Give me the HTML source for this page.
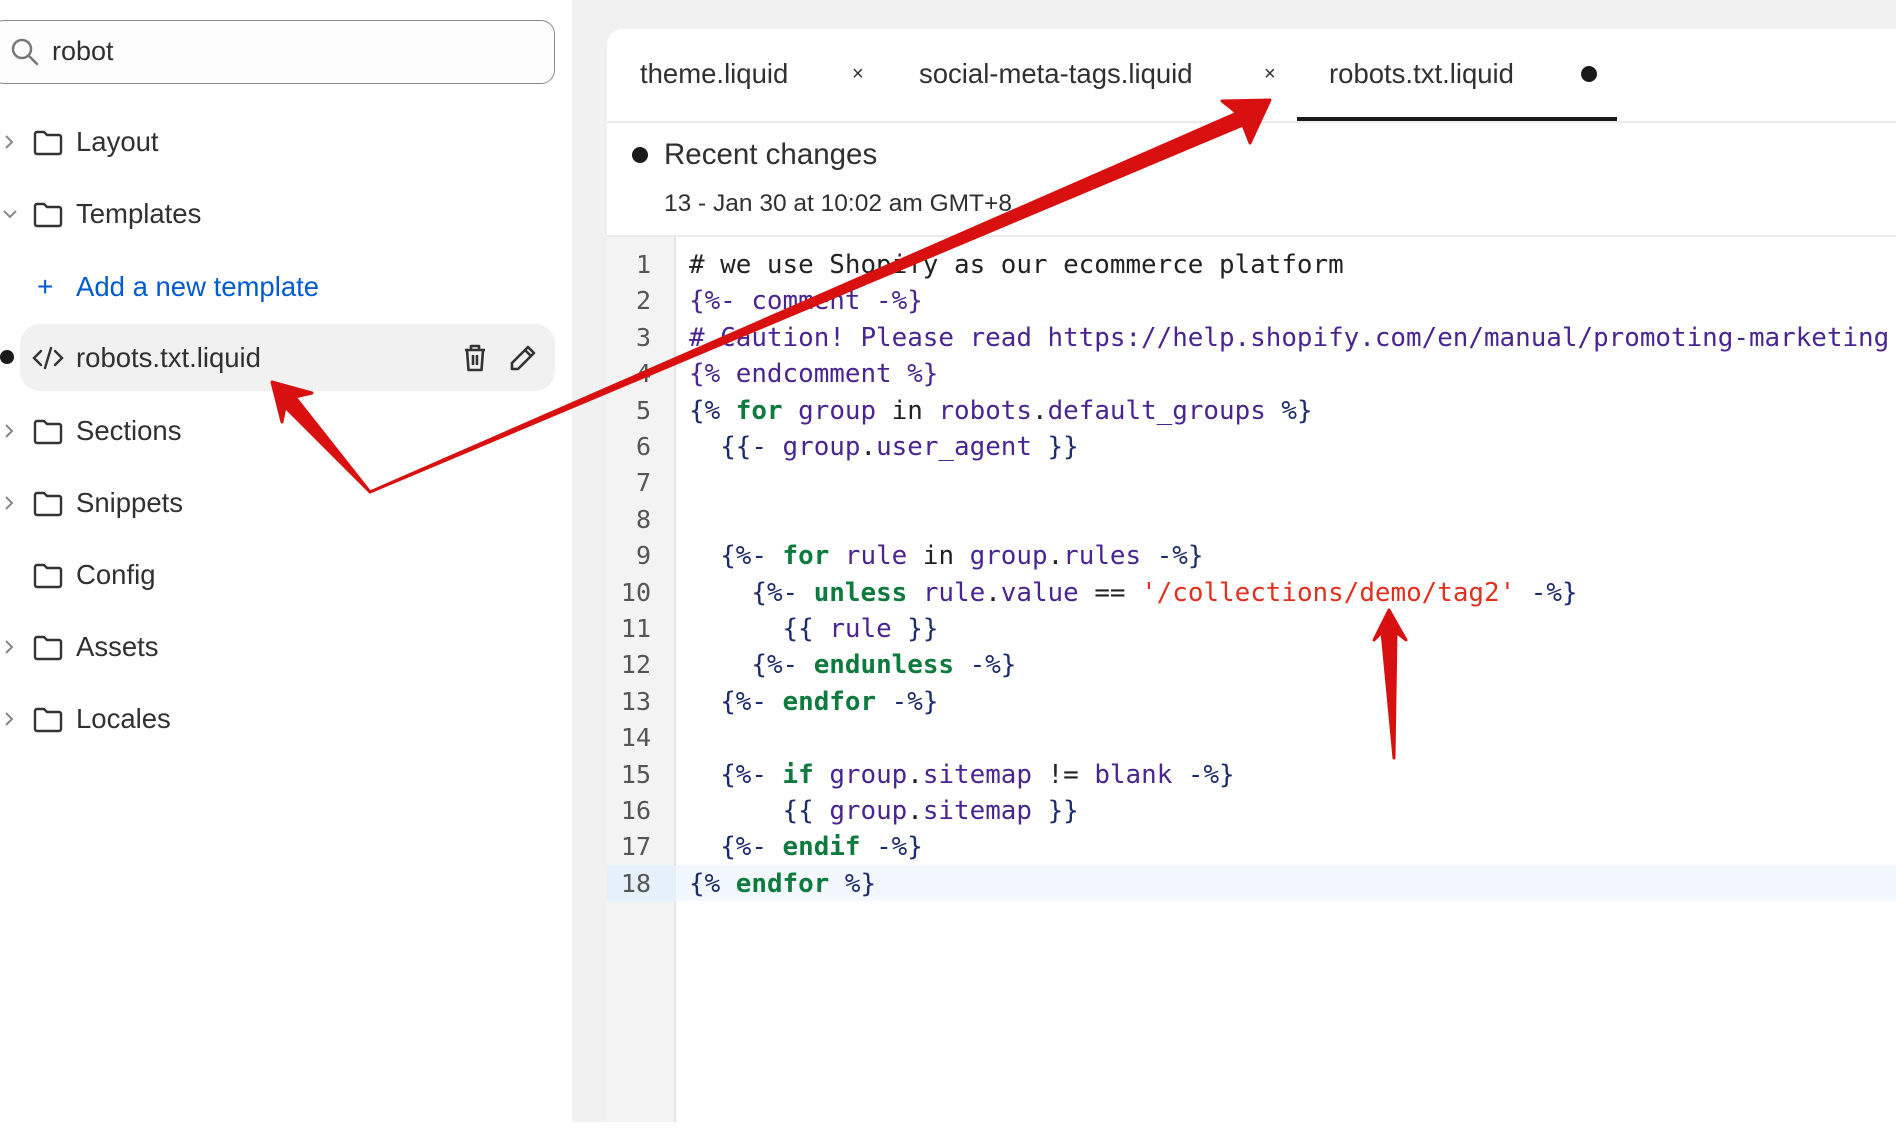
<!DOCTYPE html>
<html><head><meta charset="utf-8"><style>
*{margin:0;padding:0;box-sizing:border-box}
body{width:1896px;height:1122px;overflow:hidden;background:#fff;font-family:"Liberation Sans",sans-serif;color:#303030;position:relative}
#side{position:absolute;left:0;top:0;width:572px;height:1122px;background:#fff}
#search{position:absolute;left:-10px;top:20px;width:565px;height:64px;border:1.5px solid #8a8a8a;border-radius:14px;background:#fdfdfd}
#search span{position:absolute;left:61px;top:15px;font-size:27px;color:#303030}
.row{position:absolute;left:0;height:40px;font-size:27.5px;line-height:40px}
.row .t{position:absolute;left:76px;white-space:nowrap}
.chev{position:absolute;left:2px;top:12px}
.fold{position:absolute;left:33px;top:8px}
#sel{position:absolute;left:20px;top:324px;width:535px;height:67px;background:#f1f1f1;border-radius:20px}
#main{position:absolute;left:572px;top:0;width:1324px;height:1122px;background:#f1f1f1}
#card{position:absolute;left:607px;top:29px;width:1300px;height:1100px;background:#fff;border-top-left-radius:16px}
.tab{position:absolute;top:58px;font-size:27.5px;color:#303030;white-space:nowrap}
#code{position:absolute;left:607px;top:237px;width:1289px;height:885px;background:#fff}
#gutter{position:absolute;left:0;top:0;width:69px;height:885px;background:#f3f3f3;border-right:2px solid #e3e3e3}
.ln{position:absolute;left:0;width:44px;text-align:right;font-family:"DejaVu Sans Mono",monospace;font-size:25px;color:#555}
.cl{position:absolute;left:82px;white-space:pre;font-family:"DejaVu Sans Mono","Liberation Mono",monospace;font-size:25.9px;color:#222}
.d{color:#1c2a6e}.v{color:#4a2592}.k{color:#0f7a3d;font-weight:bold}.s{color:#e0301e}
</style></head><body>
<div id="side">
<div id="search"><svg style="position:absolute;left:19px;top:16px" width="30" height="30" viewBox="0 0 30 30"><circle cx="12" cy="12" r="9" fill="none" stroke="#777" stroke-width="2.5"/><line x1="19" y1="19" x2="27" y2="27" stroke="#777" stroke-width="2.5" stroke-linecap="round"/></svg><span>robot</span></div>
<div id="sel"></div>
</div>
<div id="main"></div>
<div id="card">
<div style="position:absolute;left:0;top:92px;width:1300px;height:2px;background:#ebebeb"></div>
<div style="position:absolute;left:0;top:206px;width:1300px;height:2px;background:#ebebeb"></div>
</div>
<div class="tab" style="left:640px">theme.liquid</div>
<div class="tab" style="left:852px;font-size:20px;top:63px">×</div>
<div class="tab" style="left:919px">social-meta-tags.liquid</div>
<div class="tab" style="left:1264px;font-size:20px;top:63px">×</div>
<div class="tab" style="left:1329px">robots.txt.liquid</div>
<div style="position:absolute;left:1581px;top:66px;width:16px;height:16px;border-radius:50%;background:#1a1a1a"></div>
<div style="position:absolute;left:1297px;top:117px;width:320px;height:4px;background:#1a1a1a"></div>
<div style="position:absolute;left:632px;top:147px;width:16px;height:16px;border-radius:50%;background:#1a1a1a"></div>
<div style="position:absolute;left:664px;top:138px;font-size:29.5px;color:#303030">Recent changes</div>
<div style="position:absolute;left:664px;top:188px;font-size:24.5px;color:#303030">13 - Jan 30 at 10:02 am GMT+8 ⌄</div>

<div id="code">
<div style="position:absolute;left:0;top:628px;width:1289px;height:36px;background:#f2f8fe"></div>
<div id="gutter"></div>
<div style="position:absolute;left:0;top:628px;width:69px;height:36px;background:#e6f0fb"></div>
</div>

<div id="lines" style="position:absolute;left:607px;top:250px">
<div class="ln" style="top:0">1</div><div class="ln" style="top:36.4px">2</div><div class="ln" style="top:72.8px">3</div><div class="ln" style="top:109.2px">4</div><div class="ln" style="top:145.6px">5</div><div class="ln" style="top:182px">6</div><div class="ln" style="top:218.4px">7</div><div class="ln" style="top:254.8px">8</div><div class="ln" style="top:291.2px">9</div><div class="ln" style="top:327.6px">10</div><div class="ln" style="top:364px">11</div><div class="ln" style="top:400.4px">12</div><div class="ln" style="top:436.8px">13</div><div class="ln" style="top:473.2px">14</div><div class="ln" style="top:509.6px">15</div><div class="ln" style="top:546px">16</div><div class="ln" style="top:582.4px">17</div><div class="ln" style="top:618.8px">18</div>
<div class="cl" style="top:0"># we use Shopify as our ecommerce platform</div>
<div class="cl v" style="top:36.4px">{%- comment -%}</div>
<div class="cl v" style="top:72.8px"># Caution! Please read https://help.shopify.com/en/manual/promoting-marketing</div>
<div class="cl v" style="top:109.2px">{% endcomment %}</div>
<div class="cl" style="top:145.6px"><span class="d">{%</span> <span class="k">for</span> <span class="v">group</span> in <span class="v">robots</span>.<span class="v">default_groups</span> <span class="d">%}</span></div>
<div class="cl" style="top:182px">  <span class="d">{{-</span> <span class="v">group</span>.<span class="v">user_agent</span> <span class="d">}}</span></div>
<div class="cl" style="top:291.2px">  <span class="d">{%-</span> <span class="k">for</span> <span class="v">rule</span> in <span class="v">group</span>.<span class="v">rules</span> <span class="d">-%}</span></div>
<div class="cl" style="top:327.6px">    <span class="d">{%-</span> <span class="k">unless</span> <span class="v">rule</span>.<span class="v">value</span> == <span class="s">'/collections/demo/tag2'</span> <span class="d">-%}</span></div>
<div class="cl" style="top:364px">      <span class="d">{{</span> <span class="v">rule</span> <span class="d">}}</span></div>
<div class="cl" style="top:400.4px">    <span class="d">{%-</span> <span class="k">endunless</span> <span class="d">-%}</span></div>
<div class="cl" style="top:436.8px">  <span class="d">{%-</span> <span class="k">endfor</span> <span class="d">-%}</span></div>
<div class="cl" style="top:509.6px">  <span class="d">{%-</span> <span class="k">if</span> <span class="v">group</span>.<span class="v">sitemap</span> != <span class="v">blank</span> <span class="d">-%}</span></div>
<div class="cl" style="top:546px">      <span class="d">{{</span> <span class="v">group</span>.<span class="v">sitemap</span> <span class="d">}}</span></div>
<div class="cl" style="top:582.4px">  <span class="d">{%-</span> <span class="k">endif</span> <span class="d">-%}</span></div>
<div class="cl" style="top:618.8px"><span class="d">{%</span> <span class="k">endfor</span> <span class="d">%}</span></div>
</div>

<!-- sidebar rows -->
<div class="row" style="top:122px"><svg class="chev" width="14" height="16" viewBox="0 0 14 16"><path d="M4 2l6 6-6 6" fill="none" stroke="#888" stroke-width="2"/></svg><svg class="fold" width="30" height="26" viewBox="0 0 30 26"><path d="M2 4a2 2 0 0 1 2-2h7l3 3h12a2 2 0 0 1 2 2v15a2 2 0 0 1-2 2H4a2 2 0 0 1-2-2z" fill="none" stroke="#333" stroke-width="2.4"/></svg><span class="t">Layout</span></div>
<div class="row" style="top:194px"><svg class="chev" width="16" height="16" viewBox="0 0 16 16"><path d="M2 5l6 6 6-6" fill="none" stroke="#888" stroke-width="2"/></svg><svg class="fold" width="30" height="26" viewBox="0 0 30 26"><path d="M2 4a2 2 0 0 1 2-2h7l3 3h12a2 2 0 0 1 2 2v15a2 2 0 0 1-2 2H4a2 2 0 0 1-2-2z" fill="none" stroke="#333" stroke-width="2.4"/></svg><span class="t">Templates</span></div>
<div class="row" style="top:267px;color:#005bd3"><span style="position:absolute;left:37px;font-size:28px">+</span><span class="t">Add a new template</span></div>
<div class="row" style="top:338px"><div style="position:absolute;left:0;top:12px;width:14px;height:14px;border-radius:50%;background:#1a1a1a"></div><svg style="position:absolute;left:32px;top:7px" width="32" height="26" viewBox="0 0 32 26"><path d="M9 6L2 13l7 7M23 6l7 7-7 7M19 3l-6 20" fill="none" stroke="#333" stroke-width="2.4" stroke-linecap="round"/></svg><span class="t">robots.txt.liquid</span>
<svg style="position:absolute;left:462px;top:5px" width="26" height="30" viewBox="0 0 26 30"><path d="M3 7h20M9 7V3h8v4M5 7l1.5 20h13L21 7M11 12v10M15 12v10" fill="none" stroke="#333" stroke-width="2.6" stroke-linejoin="round"/></svg>
<svg style="position:absolute;left:508px;top:5px" width="30" height="30" viewBox="0 0 30 30"><path d="M20 4l6 6L10 26H4v-6z M17 7l6 6" fill="none" stroke="#333" stroke-width="2.6" stroke-linejoin="round"/></svg></div>
<div class="row" style="top:411px"><svg class="chev" width="14" height="16" viewBox="0 0 14 16"><path d="M4 2l6 6-6 6" fill="none" stroke="#888" stroke-width="2"/></svg><svg class="fold" width="30" height="26" viewBox="0 0 30 26"><path d="M2 4a2 2 0 0 1 2-2h7l3 3h12a2 2 0 0 1 2 2v15a2 2 0 0 1-2 2H4a2 2 0 0 1-2-2z" fill="none" stroke="#333" stroke-width="2.4"/></svg><span class="t">Sections</span></div>
<div class="row" style="top:483px"><svg class="chev" width="14" height="16" viewBox="0 0 14 16"><path d="M4 2l6 6-6 6" fill="none" stroke="#888" stroke-width="2"/></svg><svg class="fold" width="30" height="26" viewBox="0 0 30 26"><path d="M2 4a2 2 0 0 1 2-2h7l3 3h12a2 2 0 0 1 2 2v15a2 2 0 0 1-2 2H4a2 2 0 0 1-2-2z" fill="none" stroke="#333" stroke-width="2.4"/></svg><span class="t">Snippets</span></div>
<div class="row" style="top:555px"><svg class="fold" width="30" height="26" viewBox="0 0 30 26"><path d="M2 4a2 2 0 0 1 2-2h7l3 3h12a2 2 0 0 1 2 2v15a2 2 0 0 1-2 2H4a2 2 0 0 1-2-2z" fill="none" stroke="#333" stroke-width="2.4"/></svg><span class="t">Config</span></div>
<div class="row" style="top:627px"><svg class="chev" width="14" height="16" viewBox="0 0 14 16"><path d="M4 2l6 6-6 6" fill="none" stroke="#888" stroke-width="2"/></svg><svg class="fold" width="30" height="26" viewBox="0 0 30 26"><path d="M2 4a2 2 0 0 1 2-2h7l3 3h12a2 2 0 0 1 2 2v15a2 2 0 0 1-2 2H4a2 2 0 0 1-2-2z" fill="none" stroke="#333" stroke-width="2.4"/></svg><span class="t">Assets</span></div>
<div class="row" style="top:699px"><svg class="chev" width="14" height="16" viewBox="0 0 14 16"><path d="M4 2l6 6-6 6" fill="none" stroke="#888" stroke-width="2"/></svg><svg class="fold" width="30" height="26" viewBox="0 0 30 26"><path d="M2 4a2 2 0 0 1 2-2h7l3 3h12a2 2 0 0 1 2 2v15a2 2 0 0 1-2 2H4a2 2 0 0 1-2-2z" fill="none" stroke="#333" stroke-width="2.4"/></svg><span class="t">Locales</span></div>

<svg style="position:absolute;left:0;top:0" width="1896" height="1122" viewBox="0 0 1896 1122">
<g fill="#d81010" stroke="#d81010" stroke-linejoin="round" stroke-width="3">
<polygon points="370,492 1237,113 1222,101 1270,100 1250,143 1243,125"/>
<polygon points="370,492 295,397 312,393 272,382 282,422 285,407"/>
<polygon points="1394,758 1382,632 1374,640 1389,610 1406,640 1396,632"/>
</g>
</svg>
</body></html>
